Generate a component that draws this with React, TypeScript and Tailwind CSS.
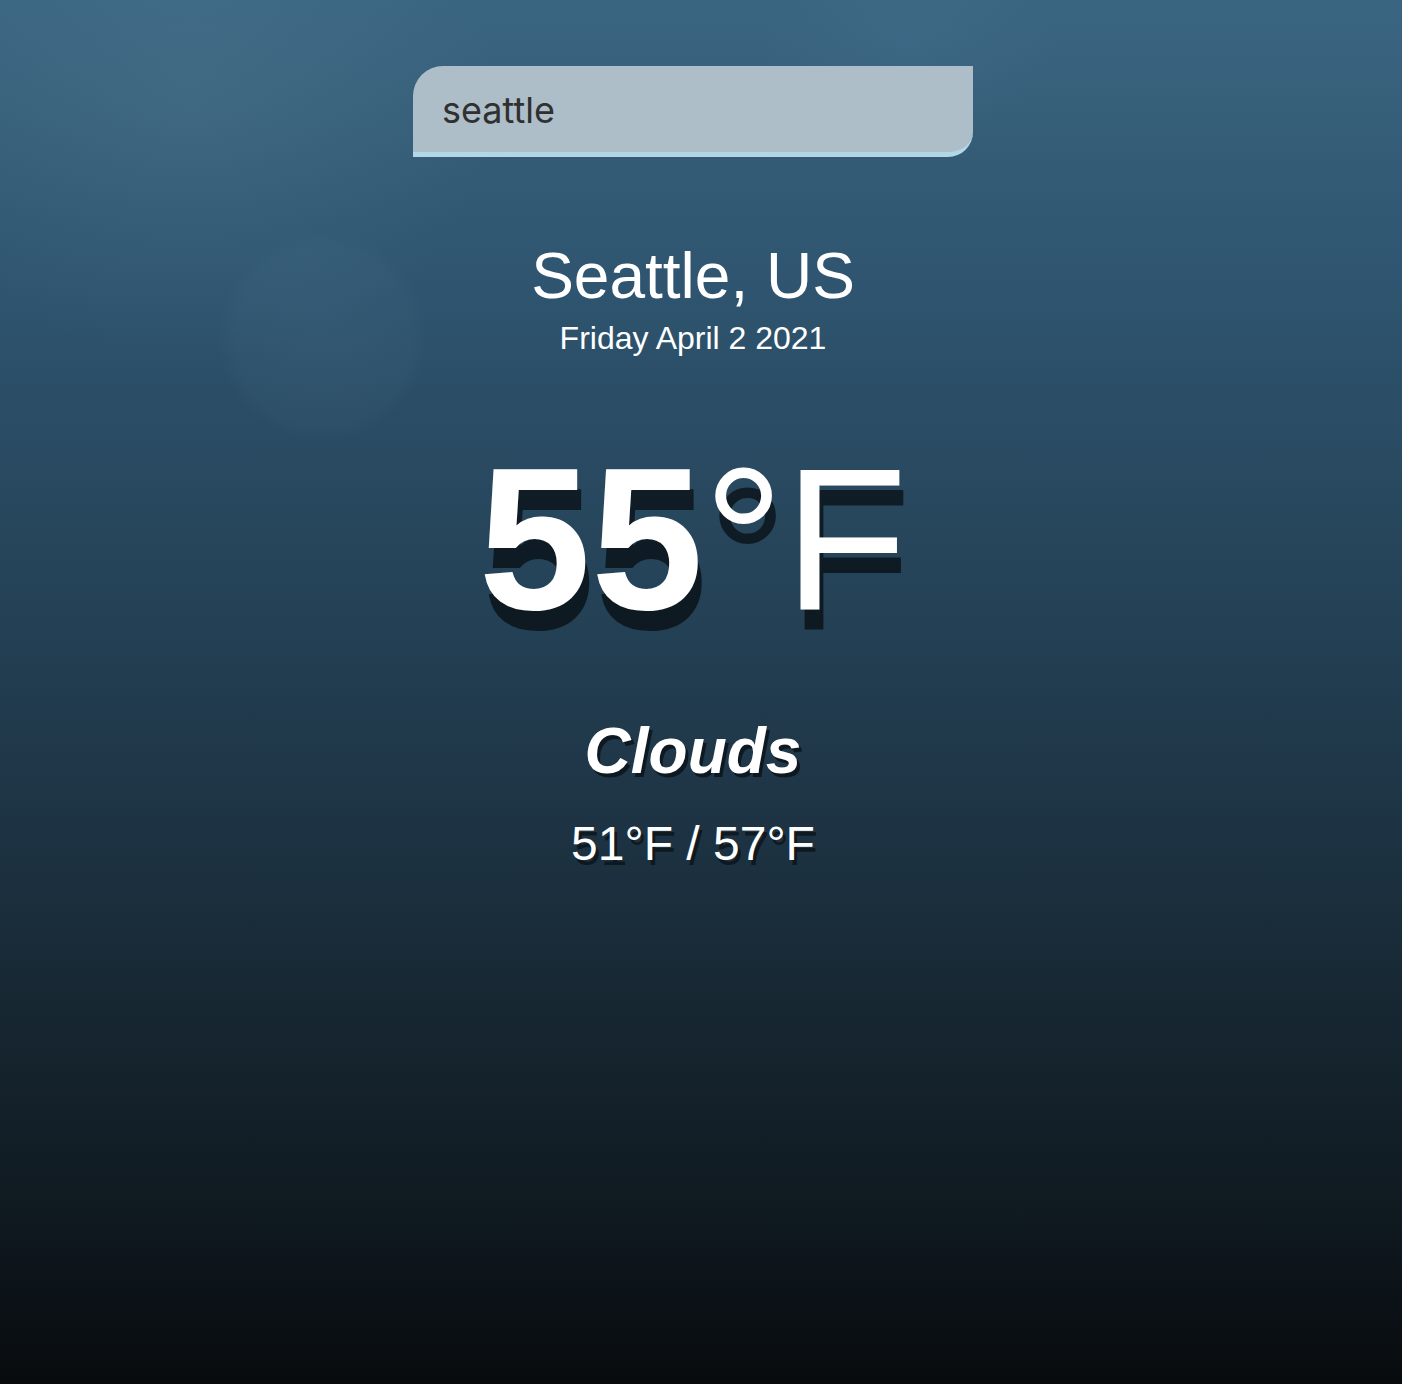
import React, { useState } from 'react';

// Weather view: search box, location, current temperature, conditions
export default function App() {
  const [query, setQuery] = useState('seattle');

  return (
    <div className="relative min-h-[1384px] w-full overflow-hidden bg-[linear-gradient(to_bottom,#3a6580_0%,#2f5570_20%,#254358_42%,#1d3343_60%,#16252f_75%,#0f1920_88%,#080b0e_100%)] font-['Liberation_Sans',Arial,sans-serif] text-white">
      {/* faint bokeh from the backdrop photo */}
      <div className="pointer-events-none absolute left-[-120px] top-[-160px] h-[520px] w-[620px] rounded-full bg-[radial-gradient(closest-side,rgba(120,160,185,0.14),rgba(120,160,185,0))]" />
      <div className="pointer-events-none absolute left-[218px] top-[232px] h-[210px] w-[210px] rounded-full bg-[radial-gradient(closest-side,rgba(110,150,175,0.09),rgba(110,150,175,0.05)_85%,rgba(110,150,175,0))]" />
      <div className="pointer-events-none absolute left-[760px] top-[-60px] h-[200px] w-[300px] rounded-full bg-[radial-gradient(closest-side,rgba(90,140,180,0.12),rgba(90,140,180,0))]" />

      <main className="relative flex w-[1386px] flex-col items-center pt-[66px]">
        <input
          value={query}
          onChange={(e) => setQuery(e.target.value)}
          className="h-[91px] w-[560px] rounded-tl-[30px] rounded-br-[25px] border-b-[5px] border-[#b2d8e5] bg-[#adbec9] px-[29px] pt-[2px] font-['Inter','Liberation_Sans',sans-serif] text-[36px] text-[#303030] outline-none"
        />

        <h1 className="mt-[87px] text-[64px] leading-none">Seattle, US</h1>
        <div className="mt-[14px] text-[32px] leading-none">Friday April 2 2021</div>

        <div className="mt-[84px] text-[202px] leading-none [text-shadow:4px_20px_0_rgba(0,0,0,0.6)]">
          <span className="font-bold">55</span>
          <span>°F</span>
        </div>

        <div className="mt-[79px] text-[64px] font-bold italic leading-none [text-shadow:3px_4px_0_rgba(0,0,0,0.55)]">
          Clouds
        </div>
        <div className="mt-[37px] text-[48px] leading-none [text-shadow:3px_5px_0_rgba(0,0,0,0.5)]">
          51°F / 57°F
        </div>
      </main>
    </div>
  );
}
